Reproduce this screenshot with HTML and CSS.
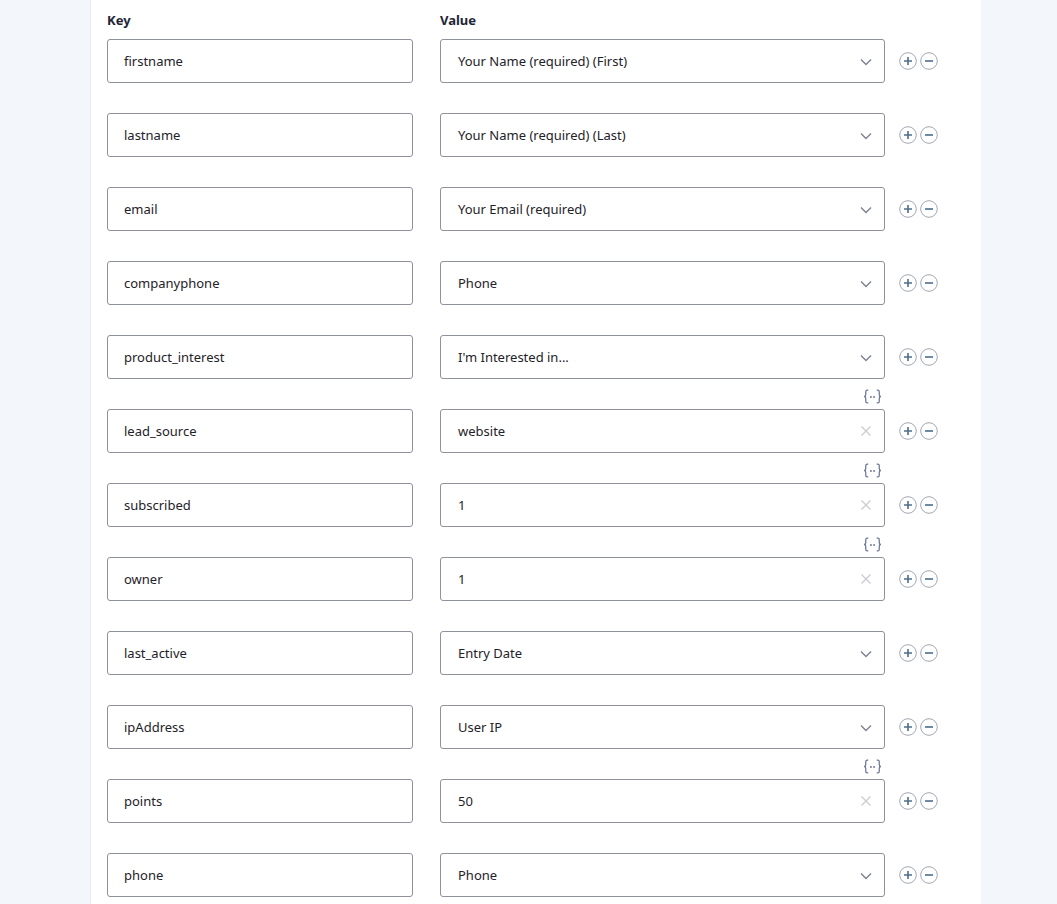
FILE: index.html
```html
<!DOCTYPE html>
<html lang="en">
<head>
    <meta charset="UTF-8">
    <title>Field Map</title>
    <link rel="stylesheet" href="styles.css">
</head>
<body>
    <div class="panel">
        <div class="map-head">
            <span>Key</span>
            <span>Value</span>
        </div>

        <div class="map-rows">
            <div class="map-row">
                <div class="field">firstname</div>
                <div class="field select">Your Name (required) (First)<svg class="chev" viewBox="0 0 12 8"><path d="M1 1.5l5 5 5-5"/></svg></div>
                <div class="actions"><svg class="circ" viewBox="0 0 18 18"><circle cx="9" cy="9" r="8.3"/><path class="sign" d="M5 9h8M9 5v8"/></svg><svg class="circ" viewBox="0 0 18 18"><circle cx="9" cy="9" r="8.3"/><path class="sign" d="M5 9h8"/></svg></div>
            </div>
            <div class="map-row">
                <div class="field">lastname</div>
                <div class="field select">Your Name (required) (Last)<svg class="chev" viewBox="0 0 12 8"><path d="M1 1.5l5 5 5-5"/></svg></div>
                <div class="actions"><svg class="circ" viewBox="0 0 18 18"><circle cx="9" cy="9" r="8.3"/><path class="sign" d="M5 9h8M9 5v8"/></svg><svg class="circ" viewBox="0 0 18 18"><circle cx="9" cy="9" r="8.3"/><path class="sign" d="M5 9h8"/></svg></div>
            </div>
            <div class="map-row">
                <div class="field">email</div>
                <div class="field select">Your Email (required)<svg class="chev" viewBox="0 0 12 8"><path d="M1 1.5l5 5 5-5"/></svg></div>
                <div class="actions"><svg class="circ" viewBox="0 0 18 18"><circle cx="9" cy="9" r="8.3"/><path class="sign" d="M5 9h8M9 5v8"/></svg><svg class="circ" viewBox="0 0 18 18"><circle cx="9" cy="9" r="8.3"/><path class="sign" d="M5 9h8"/></svg></div>
            </div>
            <div class="map-row">
                <div class="field">companyphone</div>
                <div class="field select">Phone<svg class="chev" viewBox="0 0 12 8"><path d="M1 1.5l5 5 5-5"/></svg></div>
                <div class="actions"><svg class="circ" viewBox="0 0 18 18"><circle cx="9" cy="9" r="8.3"/><path class="sign" d="M5 9h8M9 5v8"/></svg><svg class="circ" viewBox="0 0 18 18"><circle cx="9" cy="9" r="8.3"/><path class="sign" d="M5 9h8"/></svg></div>
            </div>
            <div class="map-row">
                <div class="field">product_interest</div>
                <div class="field select">I'm Interested in...<svg class="chev" viewBox="0 0 12 8"><path d="M1 1.5l5 5 5-5"/></svg></div>
                <div class="actions"><svg class="circ" viewBox="0 0 18 18"><circle cx="9" cy="9" r="8.3"/><path class="sign" d="M5 9h8M9 5v8"/></svg><svg class="circ" viewBox="0 0 18 18"><circle cx="9" cy="9" r="8.3"/><path class="sign" d="M5 9h8"/></svg></div>
            </div>
            <div class="map-row">
                <div class="field">lead_source</div>
                <div class="field text">website<svg class="clear" viewBox="0 0 10 10"><path d="M0.5 0.5l9 9M9.5 0.5l-9 9"/></svg><svg class="merge" viewBox="0 0 18 14"><path d="M5 1H4C3 1 2.6 1.6 2.6 2.6V5.4C2.6 6.3 2 7 1 7C2 7 2.6 7.7 2.6 8.6V11.4C2.6 12.4 3 13 4 13H5M13 1H14C15 1 15.4 1.6 15.4 2.6V5.4C15.4 6.3 16 7 17 7C16 7 15.4 7.7 15.4 8.6V11.4C15.4 12.4 15 13 14 13H13"/><circle class="dot" cx="7.5" cy="7.5" r="0.9"/><circle class="dot" cx="10.5" cy="7.5" r="0.9"/></svg></div>
                <div class="actions"><svg class="circ" viewBox="0 0 18 18"><circle cx="9" cy="9" r="8.3"/><path class="sign" d="M5 9h8M9 5v8"/></svg><svg class="circ" viewBox="0 0 18 18"><circle cx="9" cy="9" r="8.3"/><path class="sign" d="M5 9h8"/></svg></div>
            </div>
            <div class="map-row">
                <div class="field">subscribed</div>
                <div class="field text">1<svg class="clear" viewBox="0 0 10 10"><path d="M0.5 0.5l9 9M9.5 0.5l-9 9"/></svg><svg class="merge" viewBox="0 0 18 14"><path d="M5 1H4C3 1 2.6 1.6 2.6 2.6V5.4C2.6 6.3 2 7 1 7C2 7 2.6 7.7 2.6 8.6V11.4C2.6 12.4 3 13 4 13H5M13 1H14C15 1 15.4 1.6 15.4 2.6V5.4C15.4 6.3 16 7 17 7C16 7 15.4 7.7 15.4 8.6V11.4C15.4 12.4 15 13 14 13H13"/><circle class="dot" cx="7.5" cy="7.5" r="0.9"/><circle class="dot" cx="10.5" cy="7.5" r="0.9"/></svg></div>
                <div class="actions"><svg class="circ" viewBox="0 0 18 18"><circle cx="9" cy="9" r="8.3"/><path class="sign" d="M5 9h8M9 5v8"/></svg><svg class="circ" viewBox="0 0 18 18"><circle cx="9" cy="9" r="8.3"/><path class="sign" d="M5 9h8"/></svg></div>
            </div>
            <div class="map-row">
                <div class="field">owner</div>
                <div class="field text">1<svg class="clear" viewBox="0 0 10 10"><path d="M0.5 0.5l9 9M9.5 0.5l-9 9"/></svg><svg class="merge" viewBox="0 0 18 14"><path d="M5 1H4C3 1 2.6 1.6 2.6 2.6V5.4C2.6 6.3 2 7 1 7C2 7 2.6 7.7 2.6 8.6V11.4C2.6 12.4 3 13 4 13H5M13 1H14C15 1 15.4 1.6 15.4 2.6V5.4C15.4 6.3 16 7 17 7C16 7 15.4 7.7 15.4 8.6V11.4C15.4 12.4 15 13 14 13H13"/><circle class="dot" cx="7.5" cy="7.5" r="0.9"/><circle class="dot" cx="10.5" cy="7.5" r="0.9"/></svg></div>
                <div class="actions"><svg class="circ" viewBox="0 0 18 18"><circle cx="9" cy="9" r="8.3"/><path class="sign" d="M5 9h8M9 5v8"/></svg><svg class="circ" viewBox="0 0 18 18"><circle cx="9" cy="9" r="8.3"/><path class="sign" d="M5 9h8"/></svg></div>
            </div>
            <div class="map-row">
                <div class="field">last_active</div>
                <div class="field select">Entry Date<svg class="chev" viewBox="0 0 12 8"><path d="M1 1.5l5 5 5-5"/></svg></div>
                <div class="actions"><svg class="circ" viewBox="0 0 18 18"><circle cx="9" cy="9" r="8.3"/><path class="sign" d="M5 9h8M9 5v8"/></svg><svg class="circ" viewBox="0 0 18 18"><circle cx="9" cy="9" r="8.3"/><path class="sign" d="M5 9h8"/></svg></div>
            </div>
            <div class="map-row">
                <div class="field">ipAddress</div>
                <div class="field select">User IP<svg class="chev" viewBox="0 0 12 8"><path d="M1 1.5l5 5 5-5"/></svg></div>
                <div class="actions"><svg class="circ" viewBox="0 0 18 18"><circle cx="9" cy="9" r="8.3"/><path class="sign" d="M5 9h8M9 5v8"/></svg><svg class="circ" viewBox="0 0 18 18"><circle cx="9" cy="9" r="8.3"/><path class="sign" d="M5 9h8"/></svg></div>
            </div>
            <div class="map-row">
                <div class="field">points</div>
                <div class="field text">50<svg class="clear" viewBox="0 0 10 10"><path d="M0.5 0.5l9 9M9.5 0.5l-9 9"/></svg><svg class="merge" viewBox="0 0 18 14"><path d="M5 1H4C3 1 2.6 1.6 2.6 2.6V5.4C2.6 6.3 2 7 1 7C2 7 2.6 7.7 2.6 8.6V11.4C2.6 12.4 3 13 4 13H5M13 1H14C15 1 15.4 1.6 15.4 2.6V5.4C15.4 6.3 16 7 17 7C16 7 15.4 7.7 15.4 8.6V11.4C15.4 12.4 15 13 14 13H13"/><circle class="dot" cx="7.5" cy="7.5" r="0.9"/><circle class="dot" cx="10.5" cy="7.5" r="0.9"/></svg></div>
                <div class="actions"><svg class="circ" viewBox="0 0 18 18"><circle cx="9" cy="9" r="8.3"/><path class="sign" d="M5 9h8M9 5v8"/></svg><svg class="circ" viewBox="0 0 18 18"><circle cx="9" cy="9" r="8.3"/><path class="sign" d="M5 9h8"/></svg></div>
            </div>
            <div class="map-row">
                <div class="field">phone</div>
                <div class="field select">Phone<svg class="chev" viewBox="0 0 12 8"><path d="M1 1.5l5 5 5-5"/></svg></div>
                <div class="actions"><svg class="circ" viewBox="0 0 18 18"><circle cx="9" cy="9" r="8.3"/><path class="sign" d="M5 9h8M9 5v8"/></svg><svg class="circ" viewBox="0 0 18 18"><circle cx="9" cy="9" r="8.3"/><path class="sign" d="M5 9h8"/></svg></div>
            </div>
        </div>
    </div>
</body>
</html>
```

FILE: styles.css
```css
body { margin: 0; background: #f3f6fa; font-family: "Noto Sans", Arial, sans-serif; color: #1e2229; height: 904px; overflow: hidden; }
.panel { margin-left: 90px; width: 874px; min-height: 904px; background: #fff; border-left: 1px solid #e6eaf0; padding: 10px 0 0 16px; }
.map-head { display: grid; grid-template-columns: 306px 445px; column-gap: 27px; font-size: 13px; font-weight: bold; line-height: 20px; color: #1d2536; margin-bottom: 9px; }
.map-rows { display: flex; flex-direction: column; gap: 30px; }
.map-row { display: grid; grid-template-columns: 306px 445px auto; column-gap: 27px; align-items: center; }
.field { position: relative; height: 44px; box-sizing: border-box; border: 1px solid #8f929c; border-radius: 3px; padding: 0 16px; font-size: 13px; line-height: 42px; white-space: nowrap; }
.field.select, .field.text { padding-left: 17px; }
.chev { position: absolute; right: 12px; top: 18px; width: 12px; height: 8px; fill: none; stroke: #7d8290; stroke-width: 1.4; }
.clear { position: absolute; right: 13px; top: 16px; width: 10px; height: 10px; fill: none; stroke: #c9ccd4; stroke-width: 1.3; }
.merge { position: absolute; right: 2px; top: -21px; width: 19px; height: 15px; fill: none; stroke: #6a7799; stroke-width: 1.2; }
.merge .dot { fill: #6a7799; stroke: none; }
.actions { display: flex; gap: 3px; margin-left: -13px; }
.circ { width: 18px; height: 18px; fill: none; }
.circ circle { stroke: #a1a7b3; stroke-width: 1; }
.circ .sign { stroke: #4e6d8d; stroke-width: 1.6; }
```
